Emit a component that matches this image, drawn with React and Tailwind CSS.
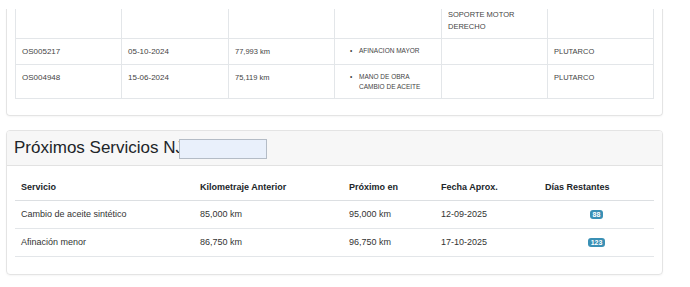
const historial = [
    { orden: 'OS005217', fecha: '05-10-2024', km: '77,993 km', servicios: ['AFINACION MAYOR'], notas: '', tecnico: 'PLUTARCO', alto: 'h-[26px]' },
    { orden: 'OS004948', fecha: '15-06-2024', km: '75,119 km', servicios: ['MANO DE OBRA CAMBIO DE ACEITE'], notas: '', tecnico: 'PLUTARCO', alto: 'h-[34px]' },
];

const proximos = [
    { servicio: 'Cambio de aceite sintético', anterior: '85,000 km', proximo: '95,000 km', fecha: '12-09-2025', dias: 88 },
    { servicio: 'Afinación menor', anterior: '86,750 km', proximo: '96,750 km', fecha: '17-10-2025', dias: 123 },
];

const cell = 'border border-[#e3e6e9] align-top px-[6px] py-0';

export default function App() {
    return (
        <div className="relative w-[690px] h-[287px] overflow-hidden bg-white pl-[6px] text-[#212529]"
            style={{ fontFamily: '"Liberation Sans", Arial, sans-serif' }}>
            {/* historial card, its top is scrolled out of view */}
            <div className="w-[657px] border-x border-b border-[#e4e4e4] rounded-b-[4px] shadow-[0_1px_2px_rgba(0,0,0,0.04)] pl-[8px] pr-[10px] pb-[16px]">
                <table className="table-fixed border-collapse w-[638px] text-[8px] text-[#444]">
                    <colgroup>
                        <col className="w-[106px]" />
                        <col className="w-[107px]" />
                        <col className="w-[106px]" />
                        <col className="w-[107px]" />
                        <col className="w-[106px]" />
                        <col className="w-[106px]" />
                    </colgroup>
                    <tbody>
                        <tr className="h-[38px]">
                            <td className={`${cell} border-t-0`}></td>
                            <td className={`${cell} border-t-0`}></td>
                            <td className={`${cell} border-t-0`}></td>
                            <td className={`${cell} border-t-0`}></td>
                            <td className={`${cell} border-t-0 pt-[9px] leading-[12px] text-[7.5px]`}>SOPORTE MOTOR<br />DERECHO</td>
                            <td className={`${cell} border-t-0`}></td>
                        </tr>
                        {historial.map((h) => (
                            <tr key={h.orden} className={h.alto}>
                                <td className={`${cell} pt-[7px] leading-[11px]`}>{h.orden}</td>
                                <td className={`${cell} pt-[7px] leading-[11px]`}>{h.fecha}</td>
                                <td className={`${cell} pt-[7px] leading-[11px] text-[7.5px]`}>{h.km}</td>
                                <td className={`${cell} pt-[7px] pl-[15px] text-[6.5px] leading-[10px]`}>
                                    {h.servicios.map((s) => (
                                        <div key={s} className="flex">
                                            <span className="w-[9px] shrink-0">•</span>
                                            <span className="w-[70px]">{s}</span>
                                        </div>
                                    ))}
                                </td>
                                <td className={`${cell} pt-[7px] leading-[11px]`}>{h.notas}</td>
                                <td className={`${cell} pt-[7px] leading-[11px] text-[7.5px]`}>{h.tecnico}</td>
                            </tr>
                        ))}
                    </tbody>
                </table>
            </div>

            {/* próximos servicios card */}
            <div className="mt-[14px] w-[657px] border border-[#e4e4e4] rounded-[4px] shadow-[0_1px_2px_rgba(0,0,0,0.04)] overflow-hidden">
                <div className="relative h-[35px] bg-[#f7f7f7] border-b border-[#e2e2e2] pl-[7px] flex items-center">
                    <h2 className="text-[17px] leading-none text-[#212529]">Próximos Servicios NJ</h2>
                    <div className="absolute left-[172px] top-[8px] w-[88px] h-[20px] bg-[#e9f0fb] border border-[#b4bcc6]" />
                </div>
                <div className="pl-[8px] pt-[9px] pb-[17px]">
                    <table className="table-fixed border-collapse w-[639px] text-[9px]">
                        <colgroup>
                            <col className="w-[179px]" />
                            <col className="w-[149px]" />
                            <col className="w-[92px]" />
                            <col className="w-[104px]" />
                            <col className="w-[115px]" />
                        </colgroup>
                        <thead>
                            <tr className="h-[26px] border-b border-[#dcdfe2]">
                                <th className="text-left font-bold px-[6px]">Servicio</th>
                                <th className="text-left font-bold px-[6px]">Kilometraje Anterior</th>
                                <th className="text-left font-bold px-[6px]">Próximo en</th>
                                <th className="text-left font-bold px-[6px]">Fecha Aprox.</th>
                                <th className="text-left font-bold px-[6px]">Días Restantes</th>
                            </tr>
                        </thead>
                        <tbody>
                            {proximos.map((p) => (
                                <tr key={p.servicio} className="h-[28px] border-b border-[#e3e6e9] text-[#333]">
                                    <td className="px-[6px]">{p.servicio}</td>
                                    <td className="px-[6px]">{p.anterior}</td>
                                    <td className="px-[6px]">{p.proximo}</td>
                                    <td className="px-[6px]">{p.fecha}</td>
                                    <td className="px-[6px] text-center">
                                        <span className="inline-block bg-[#3a90b5] text-white text-[7px] font-bold leading-[9px] px-[3px] rounded-[3px]">
                                            {p.dias}
                                        </span>
                                    </td>
                                </tr>
                            ))}
                        </tbody>
                    </table>
                </div>
            </div>

            {/* faded strip over the scrolled-off top */}
            <div className="absolute left-0 top-0 w-[690px] h-[9px] bg-white" />
        </div>
    );
}
